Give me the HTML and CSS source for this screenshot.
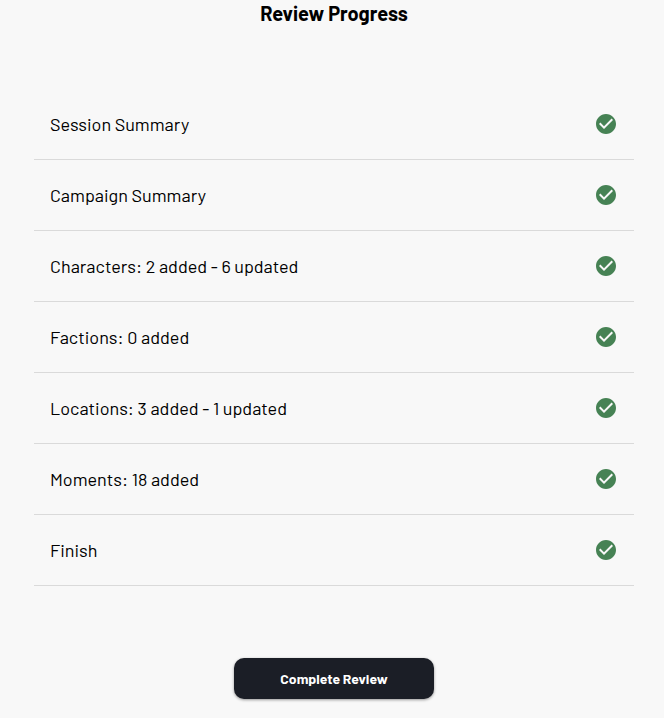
FILE: index.html
```html
<!DOCTYPE html>
<html lang="en">
<head>
  <meta charset="UTF-8">
  <meta name="viewport" content="width=device-width, initial-scale=1.0">
  <title>Review Progress</title>
  <link rel="stylesheet" href="styles.css">
</head>
<body>
  <svg class="sprite" aria-hidden="true">
    <symbol id="check" viewBox="0 0 24 24">
      <path d="M12 2C6.48 2 2 6.48 2 12s4.48 10 10 10 10-4.480 10-10S17.520 2 12 2zm-2 15l-5-5 1.410-1.410L10 14.170l7.590-7.590L19 8l-9 9z"/>
    </symbol>
  </svg>

  <main class="review">
    <h1 class="title">Review Progress</h1>

    <ul class="steps">
      <li class="step">
        <span>Session Summary</span>
        <svg class="icon"><use href="#check"/></svg>
      </li>
      <li class="step">
        <span>Campaign Summary</span>
        <svg class="icon"><use href="#check"/></svg>
      </li>
      <li class="step">
        <span>Characters: 2 added - 6 updated</span>
        <svg class="icon"><use href="#check"/></svg>
      </li>
      <li class="step">
        <span>Factions: 0 added</span>
        <svg class="icon"><use href="#check"/></svg>
      </li>
      <li class="step">
        <span>Locations: 3 added - 1 updated</span>
        <svg class="icon"><use href="#check"/></svg>
      </li>
      <li class="step">
        <span>Moments: 18 added</span>
        <svg class="icon"><use href="#check"/></svg>
      </li>
      <li class="step">
        <span>Finish</span>
        <svg class="icon"><use href="#check"/></svg>
      </li>
    </ul>

    <button type="button" class="complete">Complete Review</button>
  </main>
</body>
</html>
```

FILE: styles.css
```css
* {
  box-sizing: border-box;
}
body {
  margin: 0;
  background: #f8f8f8;
  color: #000;
  font-family: Barlow, Roboto, sans-serif;
}
.sprite {
  display: none;
}
.review {
  display: flex;
  flex-direction: column;
  align-items: center;
  padding: 0 30px 16px 34px;
}
.title {
  margin: 0 0 63px;
  font-size: 20px;
  line-height: 26px;
  font-weight: 700;
}
.steps {
  width: 100%;
  margin: 0 0 72px;
  padding: 0;
  list-style: none;
}
.step {
  display: flex;
  justify-content: space-between;
  align-items: center;
  padding: 23px 16px;
  border-bottom: 1px solid #dadada;
  font-size: 18px;
  line-height: 23px;
}
.icon {
  width: 24px;
  height: 24px;
  fill: #468254;
}
.complete {
  width: 200px;
  padding: 10px 16px;
  border: none;
  border-radius: 10px;
  background: #1b1e26;
  color: #fff;
  font-family: inherit;
  font-size: 14px;
  line-height: 21px;
  font-weight: 700;
  cursor: pointer;
  box-shadow: 0 1px 3px rgba(0, 0, 0, .4);
}
```
